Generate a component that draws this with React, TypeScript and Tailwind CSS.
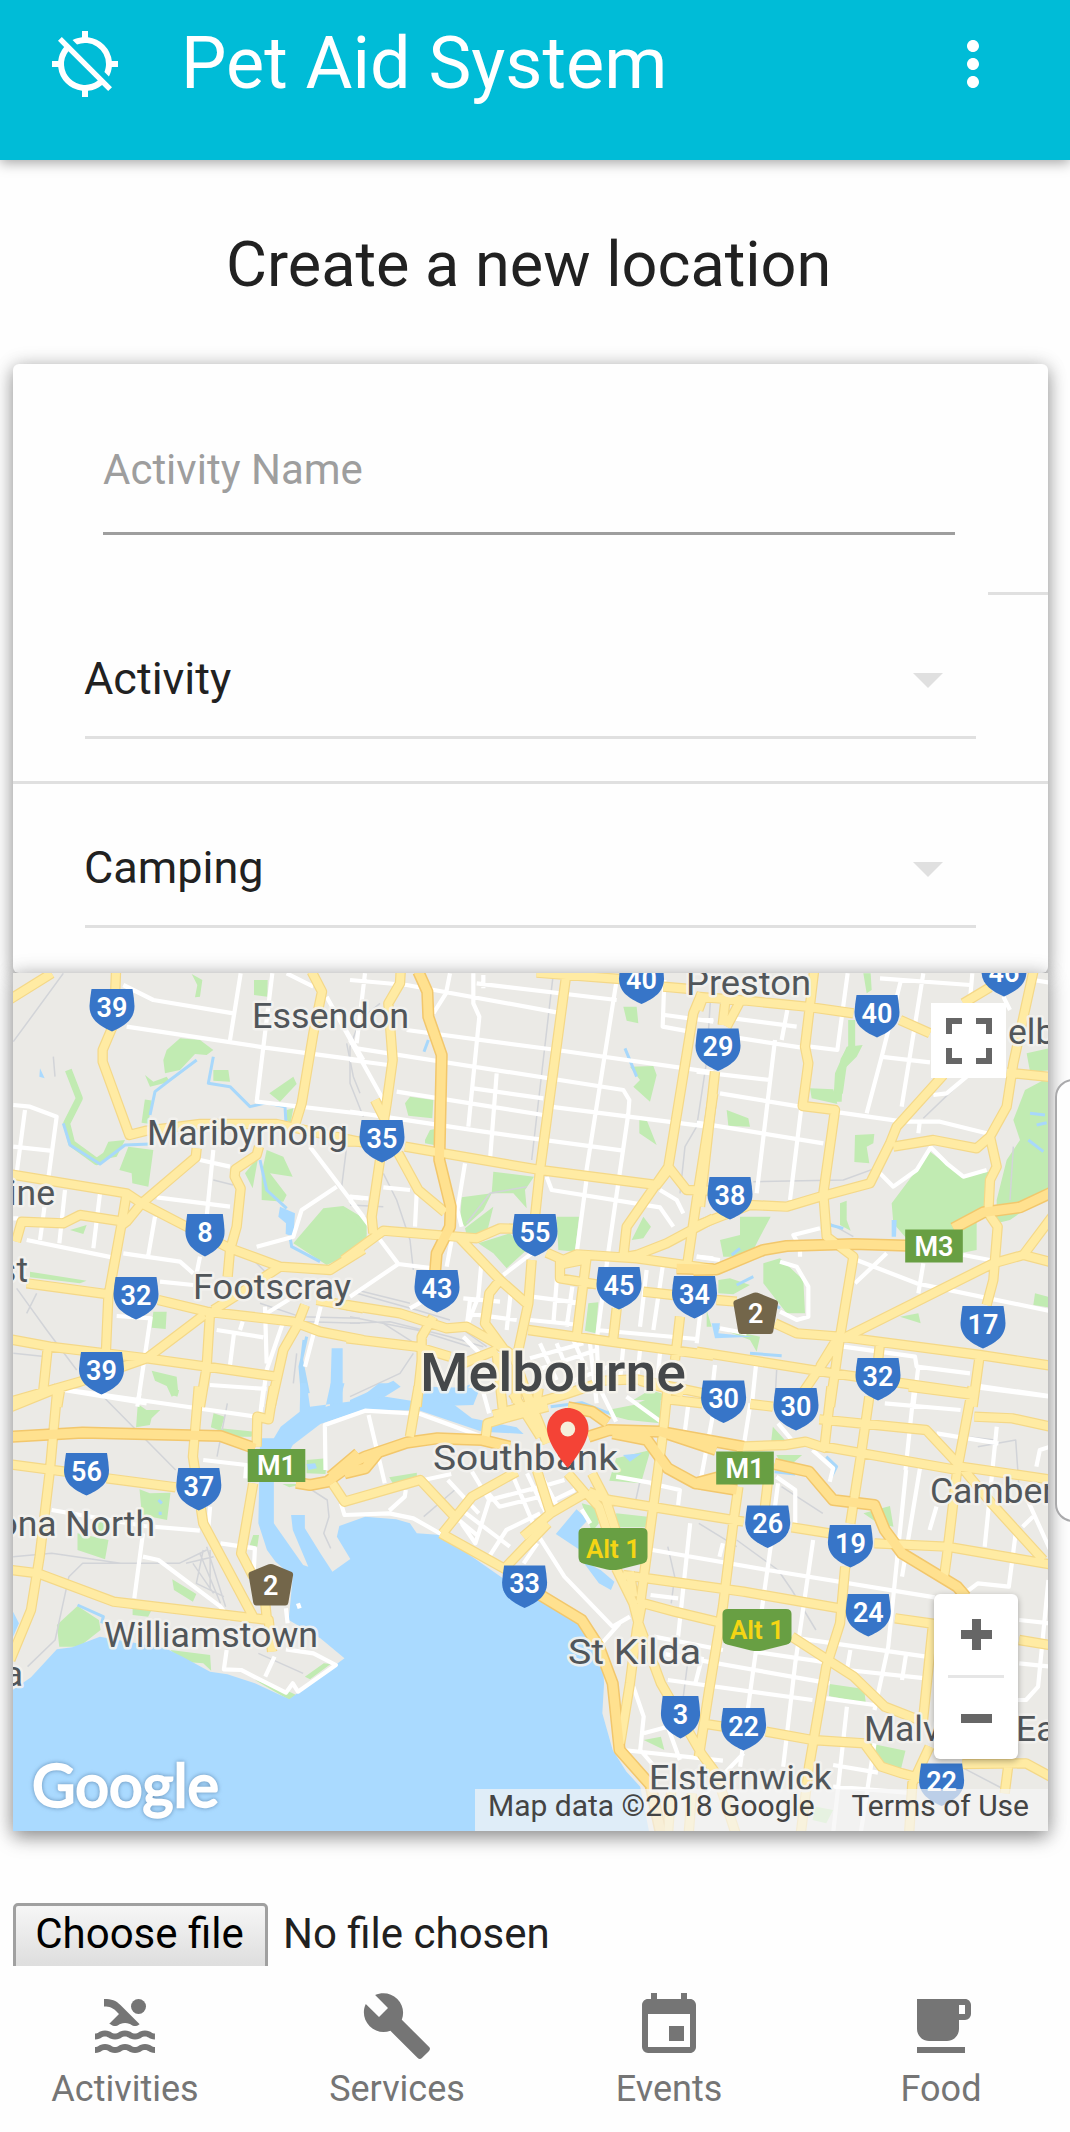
import { Fragment } from "react";
import {
  MdBuild,
  MdEvent,
  MdLocalCafe,
  MdLocationDisabled,
  MdMoreVert,
  MdPool,
} from "react-icons/md";

type Tile = {
  transform: string;
  gray: string;
  parks: string;
  strips: string;
  water: string;
  rivers: string;
  minor: string;
  major: string;
  highway: string;
};

/* Map geometry, split into five tiles that each have their own local grid. */
const TILES: Tile[] = [
  {
    transform: "translate(0 960) scale(0.33333)",
    gray: "M190,40 L40,245 M50,985 L140,1110 L230,1230 M80,1060 L110,1000 M40,1180 L140,1190 M1040,250 L1060,350 L1080,400 M1040,560 L1025,680 M640,660 L700,675 M900,1070 L1080,1075 M920,1085 L1080,1090 M780,1030 L900,1070 M160,290 L165,350 M760,900 L820,960 M890,1180 L880,1270",
    parks:
      "M490,300 L500,270 L540,235 L600,240 L640,270 L620,285 L585,282 L540,330 L495,340Z M450,380 L435,345 L460,365 L500,350 L510,365Z M640,330 L685,330 L690,365 L640,362Z M762,60 L803,60 L802,110 L762,105Z M385,560 L460,570 L445,680 L397,670 L395,640 L358,630Z M300,600 L325,545 L375,540 L350,590Z M808,400 L880,350 L890,372 L840,425Z M800,570 L850,590 L878,650 L810,640 L860,705 L850,725 L785,720 L785,640Z M775,590 L735,640 L758,685Z M880,850 L970,745 L1030,738 L1100,780 L1100,860 L980,915Z M210,810 L260,795 L250,822Z M90,935 L260,962 L240,970 L90,952Z M460,1055 L500,1055 L497,1107 L455,1103Z M455,1232 L530,1250 L535,1300 L515,1310 L500,1278 L465,1262Z M575,42 L607,60 L600,110 L585,112 L592,75Z M860,450 L880,445 L872,490 L860,480Z",
    strips: "M205,330 L238,415 L200,490 L215,550 L290,605 L340,570 M435,490 L445,420",
    water: "M840,740 L885,760 L880,830 L857,822 L858,790 L835,770Z M995,1165 L1028,1165 L1028,1340 L990,1340Z M120,325 L134,355 L118,350Z",
    rivers:
      "M590,300 L510,360 L465,395 L450,465 M640,290 L625,370 L690,380 L750,440 L800,428 L855,440 L858,490 M190,490 L210,555 L300,612 L375,555 L450,552 M780,600 L800,690 L860,745 M870,830 L875,860 L960,905 M920,1130 L900,1220 L910,1340 M905,1220 L920,1330 M912,1140 L905,1200 L925,1300",
    minor:
      "M370,75 L460,120 L700,160 M722,40 L690,240 M380,200 L790,262 L1090,302 M817,40 L770,425 L1090,462 M860,40 L940,80 M980,110 L1090,310 M985,120 L1090,300 M40,435 L90,440 L170,470 L120,840 M75,450 L50,640 M40,560 L150,572 M195,690 L178,850 M300,700 L280,865 M80,840 L340,893 M370,880 L540,905 L580,940 M465,770 L445,885 M470,712 L690,740 M640,570 L620,770 M600,600 L690,620 M600,890 L590,940 M930,560 L1090,770 M1010,680 L905,750 L880,830 L770,860 M1045,710 L1090,715 M452,1070 L412,1340 M350,1068 L455,1075 M480,965 L580,975 M650,1110 L790,1132 M728,1085 L720,1110 M702,1120 L690,1215 M850,1085 L800,1230 L785,1340 M795,1040 L800,1210 M630,1275 L800,1287 M962,1040 L915,1220 M190,1290 L440,1330 M880,1010 L800,1060 M40,775 L55,775",
    major:
      "M30,118 L155,40 M348,35 L342,190 L308,270 L308,305 L388,525 L440,512 L600,492 L830,492 L1090,548 M935,35 L966,95 L940,220 L905,430 L885,495 M590,565 L587,592 L425,730 L380,785 L360,800 M777,560 L770,585 L706,628 L704,650 L722,685 L710,800 L690,870 L683,950 M30,643 L380,700 L425,730 L550,795 L690,865 L840,920 L990,930 L1090,868 M48,845 L65,785 L190,790 L240,765 L370,785 M380,700 L365,790 L325,1010 L318,1170 M80,970 L325,1003 M475,1020 L620,1055 L880,1085 L960,1115 L1090,1140 M640,1050 L720,1000 L840,920 M30,1138 L150,1160 L440,1195 L620,1220 L830,1250 M143,1165 L130,1290 M30,1325 L240,1265 L440,1195 L612,1065 M630,1060 L620,1220 L600,1340 M915,1035 L890,1100 L850,1170 L812,1340 M950,1020 L1090,1045 M180,1290 L172,1340",
    highway: "",
  },
  {
    transform: "translate(350 960) scale(0.33333)",
    gray: "M610,40 L545,600 M1075,270 L1040,500 L1005,560 L990,700 M90,130 L30,180 L0,260 L0,370 L40,470 M100,640 L140,720 L180,840 L190,930 M0,735 L100,740 M0,1090 L120,1085 L300,1130 L400,1160 M0,1070 L200,1110 L360,1160 M20,990 L180,1030 M0,1310 L150,1240 L190,1180 M20,1000 L200,1050 L300,1080 M100,1090 L210,1160 M350,790 L420,700 L530,680 M340,1110 L410,1160",
    parks:
      "M165,430 L180,410 L250,420 L247,475 L175,467Z M225,540 L240,510 L252,508 L252,555 L225,550Z M430,635 L552,650 L525,690 L530,745 L490,700 L425,700Z M335,712 L425,700 L400,750 L345,800 L330,780Z M345,805 L430,740 L415,800 L400,835 L350,825Z M385,850 L480,820 L530,870 L470,925 L430,880Z M620,770 L687,770 L675,875 L625,870Z M845,840 L880,770 L903,800 L880,835Z M820,140 L860,140 L865,190 L830,182Z M840,320 L910,318 L920,345 L900,425 L850,380 L870,360Z M868,480 L890,480 L920,555 L868,520Z M715,1030 L745,1027 L737,1120 L705,1112Z M-20,755 L50,820 L-20,870Z M850,1320 L900,1290 L1000,1320Z M1070,1050 L1085,1100 L1070,1100Z",
    strips: "",
    water: "M0,1320 L130,1262 L152,1280 L80,1325 L0,1345Z M200,1325 L240,1280 L390,1285 L370,1335 L200,1340Z",
    rivers: "M235,240 L222,275 M825,265 L860,350",
    minor:
      "M0,60 L170,75 L620,157 M45,40 L20,250 M300,40 L288,100 L250,160 M170,210 L620,270 L1090,337 M20,265 L820,390 L838,420 L835,460 L770,910 M370,40 L370,130 L388,170 L355,500 M380,70 L800,120 M400,45 L400,85 M800,60 L708,640 M140,395 L580,465 M0,455 L400,515 L820,572 M440,340 L420,600 M370,385 L580,415 M600,440 L1090,502 M0,300 L115,315 M345,610 L322,750 L335,800 M590,650 L605,690 L930,742 L970,800 M930,690 L980,720 L1000,760 M712,640 L680,880 M772,900 L740,1140 L745,1250 M100,682 L180,690 M200,700 L195,800 M0,720 L145,912 L250,925 M145,912 L0,1010 M0,710 L55,715 M305,840 L290,920 M395,900 L385,1010 L350,1100 M460,945 L545,880 M340,1015 L450,1025 M482,1000 L470,1110 M350,1060 L500,1080 M545,1010 L700,1030 M540,1080 L690,1095 M622,940 L610,1090 M667,980 L650,1100 M890,930 L870,1100 M938,920 L910,1110 M740,1110 L1040,1137 M1052,1050 L1040,1150 M943,60 L938,200 L1020,215 M945,165 L1090,185 M1040,890 L1090,895 M360,1020 L350,1100 M0,240 L100,420 M180,1045 L260,1000 M540,1195 L700,1150 M560,1230 L740,1170 M570,1150 L620,1260 M620,1150 L660,1250 M670,1140 L710,1230 M600,1290 L800,1210 M720,1150 L740,1330 M820,1160 L810,1260 M870,1170 L860,1270 M930,1180 L920,1280 M340,1130 L400,1190",
    major:
      "M152,35 L150,70 L115,130 L128,300 L110,430 L102,480 M75,420 L105,480 M-10,545 L35,545 M165,560 L570,630 L920,675 L955,630 M145,580 L205,690 L285,757 M90,600 L65,770 L70,820 M-20,900 L100,812 L320,830 L380,835 L450,805 L490,806 M650,35 L570,630 L555,770 M560,38 L810,57 M940,80 L1020,87 M1055,100 L1030,160 L955,620 L1010,690 L1090,692 M955,620 L830,800 L820,890 M1090,775 L950,850 L860,885 L830,890 M1090,400 L1040,720 L1010,925 M590,878 L640,900 L680,883 L860,895 L1090,927 M630,900 L630,955 L740,973 M640,912 L700,900 M880,995 L970,1005 M710,890 L680,1130 M545,900 L535,1030 L505,1170 M330,835 L450,960 L535,1035 M450,960 L418,1000 L405,1090 L460,1165 M-10,1035 L150,1060 L290,1105 L350,1100 L430,1145 L480,1180 M250,1070 L215,1130 L215,1200 L200,1340 M-10,1135 L200,1160 L300,1190 M535,1110 L780,1145 L1090,1187 M800,1045 L790,1135 M990,1070 L975,1200 M440,1180 L458,1345 M485,1170 L545,1345 M500,1185 L500,1330 M340,1210 L440,1170 M430,1365 L640,1305 L730,1275 M760,1262 L860,1258 L1060,1300 M870,1262 L1000,1300",
    highway: "M205,35 L232,95 L235,170 L275,285 L268,600 L302,740 L300,800 L260,880 L255,940 M980,925 L1090,928",
  },
  {
    transform: "translate(700 960) scale(0.33333)",
    gray: "M800,350 L670,475 M160,665 L430,660 L540,620 M390,790 L460,830 M940,560 L930,720 M35,60 L20,300 M230,1230 L225,1320",
    parks:
      "M330,385 L400,388 L412,432 L335,415Z M80,450 L145,475 L150,500 L85,497Z M465,525 L523,522 L520,550 L500,560 L508,610 L463,606Z M690,575 L790,650 L865,635 L862,740 L830,770 L830,870 L780,880 L615,830 L580,790 L575,730 L620,670Z M975,390 L1060,345 L1060,690 L930,780 L890,790 L890,720 L920,600 L960,540 L940,480Z M980,280 L1060,262 L1060,330 L990,335Z M420,730 L440,722 L440,780 L452,812 L420,795Z M120,770 L212,770 L175,840 L150,890 L70,890 L60,840 L120,825Z M190,910 L240,895 L310,960 L315,1060 L260,1060 L190,970Z M55,960 L90,955 L150,975 L100,1003 L55,1000Z M1005,1000 L1050,1012 L1045,1042 L1000,1035Z M600,1070 L655,1060 L662,1090Z M45,1100 L180,1130 L170,1175 L150,1140Z M490,40 L512,40 L515,90 L500,100Z M440,260 L488,255 L470,290 L430,330 L425,425 L400,425 L405,340Z",
    strips: "M455,180 L455,260 L432,300 L418,400",
    water: "M35,1090 L60,1090 L55,1120 L160,1130 L45,1135Z M575,780 L590,780 L588,830 L575,830Z",
    rivers: "M110,975 L160,950 M990,460 L1035,465 M985,540 L1030,575 M1010,495 L1040,488 M150,1180 L245,1187 M200,1020 L240,1045 M95,885 L120,865 M390,795 L430,805",
    minor:
      "M443,40 L412,270 L330,260 M603,60 L545,290 L500,460 M540,290 L690,307 M670,40 L605,440 M540,55 L810,75 M817,40 L810,120 M60,170 L290,200 M262,150 L245,240 M90,230 L300,262 M225,240 L170,700 M-10,335 L210,360 M60,400 L300,440 M303,450 L270,720 M-10,488 L370,550 M400,455 L610,485 L720,485 L860,520 M660,480 L655,520 M800,350 L740,400 L700,405 M540,640 L580,680 L650,630 L692,562 L740,610 L790,650 L860,630 M470,900 L650,970 L1060,1055 M560,880 L465,970 M670,910 L655,1000 M790,885 L870,900 M360,805 L280,825 L300,860 L300,890 M240,905 L290,920 L325,980 L325,1070 L290,1080 L240,1055 M-10,890 L60,900 M430,1160 L645,1190 L650,1220 L810,1240 M655,1220 L640,1340 M840,1278 L1060,1310 M168,1215 L155,1340 M45,1215 L40,1260 M1000,60 L1060,70 M910,110 L930,150 M0,180 L40,180 M60,1105 L140,1120",
    major:
      "M-10,110 L140,122 L320,140 L460,160 M10,110 L-5,150 M78,105 L68,195 M125,115 L80,200 M342,35 L315,260 L325,310 L308,438 L405,450 L370,700 L380,830 L460,890 L420,1130 L390,1340 M600,180 L690,220 M730,345 L590,500 L570,550 L510,670 L360,710 L260,740 L150,735 L-10,797 M870,82 L790,130 M1000,35 L940,310 L920,440 L870,530 L830,565 L700,540 L580,560 M920,338 L1060,352 M870,530 L890,620 L870,660 L865,760 L893,800 L880,960 L860,1035 M45,335 L0,740 M440,1130 L880,910 L970,885 L1060,908 M1060,765 L970,885 M50,1020 L110,1025 M225,1090 L290,1120 L420,1130 L840,1185 L1060,1218 M-10,1175 L400,1240 L820,1300 M840,1180 L818,1340 M430,1120 L300,1310 M540,1150 L535,1195 M415,1130 L360,1220",
    highway: "M-20,930 L50,928 L190,870 L260,858 L460,852 L620,857 M760,805 L850,757 L960,742 L1060,695",
  },
  {
    transform: "translate(0 1390) scale(0.34447 0.33333)",
    gray: "M300,20 L510,240 M660,40 L630,200 M38,500 L150,490 L350,520 L520,520 L600,480 M350,520 L240,520 L200,560 L160,750 L80,830 M600,470 L655,650 M590,480 L570,580 L650,620 M580,490 L640,640 M560,520 L620,610 M610,480 L610,600 M540,520 L620,500 M890,290 L950,330 L955,380 L940,430 L960,475 M750,790 L880,850 M1230,380 L1320,300",
    parks:
      "M165,705 L225,648 L287,690 L292,720 L230,770 L172,770Z M400,42 L425,60 L465,60 L440,85 L435,105 L395,112Z M620,70 L652,80 L640,122 L612,112Z M405,298 L435,310 L495,308 L485,390 L412,375Z M225,430 L315,450 L305,508 L225,480Z M495,780 L610,795 L613,842 L590,820 L530,815Z M885,860 L940,820 L960,822 L900,868Z M500,568 L570,612 L560,635 L505,600Z M890,210 L948,205 L945,252 L890,250Z M1130,262 L1210,248 L1210,270 L1140,280Z M640,115 L740,125 L730,140 L640,140Z M735,435 L752,435 L747,470 L725,465Z M740,870 L840,905 L860,915 L840,930Z M820,282 L880,282 L840,292Z M385,655 L440,660 L430,680 L385,675Z M495,0 L520,0 L515,20 L500,15Z M275,380 L310,400 L300,440 L275,430Z",
    strips: "",
    water:
      "M872,-20 L870,65 L815,110 L795,145 L755,145 L750,400 L775,480 L800,515 L850,560 L838,690 L930,745 L1000,805 L840,928 L740,880 L660,853 L610,845 L530,800 L480,775 L290,740 L210,772 L165,778 L90,862 L30,905 L30,1400 L1600,1400 L1600,650 L1460,565 L1280,435 L1210,430 L1190,400 L1150,388 L1060,380 L985,408 L978,440 L1017,507 L965,545 L930,490 L885,415 L885,375 L845,375 L850,420 L895,530 L880,525 L795,400 L795,270 L850,165 L930,102 L1060,58 L1220,62 L1400,125 L1520,132 L1500,112 L1370,85 L1300,30 L1240,40 L1120,20 L1050,30 L900,50 L890,-20Z M960,-20 L1000,-20 L985,40 L945,50Z M1050,20 L1100,-20 L1150,-20 L1100,30Z M1225,20 L1300,15 L1370,-20 L1350,5 L1310,45Z M38,665 L55,700 L38,740Z M890,222 L915,220 L920,235 L895,240Z",
    rivers: "M225,645 L300,680 L295,700 M460,330 L470,340 M465,365 L465,375",
    minor:
      "M165,-5 L405,30 L760,82 M405,10 L400,40 M765,-10 L755,80 M590,210 L715,225 L712,265 M150,360 L420,408 L580,422 M415,430 L390,625 M415,500 L460,510 L640,650 L670,690 M610,350 L605,410 M640,460 L740,475 L737,540 M658,780 L650,838 L700,840 L830,908 L850,880 L865,905 L975,825 L910,790 L830,778 M797,800 L770,860 M945,240 L943,105 L1060,62 L1220,72 L1400,140 M1070,75 L1117,280 M990,340 L1000,375 L1130,370 L1200,385 L1280,432 M1130,362 L1175,320 L1178,300 M1230,270 L1310,252 M1300,270 L1390,370 M1320,380 L1390,440 M1340,360 L1480,470 M1340,400 L1380,460 L1420,330 M1410,300 L1450,350 L1568,320 M1370,245 L1420,330 L1568,290 M1490,260 L1568,450 M1530,250 L1590,380 M1420,500 L1470,420 L1568,370 M1400,-5 L1420,70 M1560,460 L1520,520 M830,655 L835,700 M870,655 L865,640",
    major:
      "M30,52 L165,-5 M167,-10 L145,240 L115,500 L90,660 L30,810 M577,-10 L560,200 L590,400 L740,690 M795,-10 L780,88 L747,80 L745,170 M735,280 L700,490 L735,560 M30,223 L190,245 M310,265 L510,292 M30,540 L110,550 L330,635 L780,690 L790,785 M770,640 L775,690 M965,280 L1000,335 L1220,270 L1320,380 M1285,430 L1370,320 L1500,245 M1280,430 L1475,542 M1460,540 L1590,400 M1215,-10 L1190,140 M1410,140 L1415,100 L1480,80 L1590,50",
    highway: "M30,140 L240,128 L640,138 L740,175 M860,278 L900,285 L950,275 L1030,215 L1060,200 L1180,158 L1270,145 L1400,150 L1480,170 M960,260 L1040,190 M1000,250 L1060,235 L1100,185",
  },
  {
    transform: "translate(530 1390) scale(0.34447 0.33333)",
    gray: "M320,270 L305,340 M730,290 L850,370 M600,450 L720,540 L760,600 L830,720 M490,400 L600,470 M400,470 L420,560 L410,640 M460,800 L440,960 M1300,170 L1410,150 L1420,300 M1250,1130 L1380,1200 M1180,130 L1350,150",
    parks:
      "M225,60 L300,45 L380,10 L378,100 L285,90 L230,75Z M250,205 L350,180 L322,280 L230,272Z M150,340 L190,350 L200,400 L180,425Z M250,370 L342,380 L335,412 L250,412Z M968,370 L1045,348 L1055,410 L1010,400Z M870,882 L970,897 L975,940 L868,918Z M985,1060 L1090,1082 L1075,1145 L1020,1130Z M705,110 L740,150 L700,155Z M715,195 L790,195 L740,240Z M830,1250 L880,1260 L860,1300 L820,1290Z M330,1050 L380,1040 L390,1080Z",
    strips: "",
    water:
      "M-20,640 L50,640 L100,675 L150,700 L180,760 L210,800 L215,880 L210,970 L240,1080 L280,1145 L320,1190 L360,1400 L-20,1400Z M75,432 L135,358 L168,390 L145,415 L145,480Z M150,510 L205,540 L245,575 L235,600 L200,580Z M270,195 L325,190 L290,215Z",
    rivers: "M710,245 L770,252 M60,50 L150,38 L230,70 M860,200 L890,230 L870,270",
    minor:
      "M200,-10 L250,95 M280,20 L400,110 M460,40 L450,120 M530,80 L490,300 M640,40 L620,170 M720,100 L760,150 L810,150 M355,480 L690,540 L1175,622 M822,450 L770,820 L735,1130 M700,460 L640,900 L610,1130 M465,400 L430,740 M1092,240 L1040,770 L1000,960 M1115,-5 L1090,240 M1132,235 L1080,560 M1355,110 L1320,470 M1030,40 L1250,60 M760,742 L1150,800 M380,790 L870,880 M650,785 L880,820 M400,870 L820,930 M860,925 L1000,945 M930,780 L920,840 L1150,865 M1092,790 L1080,870 M1410,430 L1390,590 L1300,580 L1255,615 M1505,570 L1475,890 L1440,930 L1410,930 M20,430 L100,560 L240,710 L290,680 M200,770 L260,700 M300,890 L330,980 L320,1080 L370,1140 M270,1080 L560,1112 M330,1030 L400,1010 L435,1110 M920,950 L880,1330 M1000,1060 L960,1330 M880,1125 L1010,1148 M880,1190 L1120,1210 M1420,820 L1510,830 M1420,690 L1510,700 M715,260 L770,300 L770,400 M720,280 L705,400 M820,180 L880,235 L870,275 M350,280 L435,300 L430,345 M350,615 L430,625 M150,358 L175,400 M1280,-10 L1510,20 M1180,130 L1360,160 M1470,230 L1480,180 L1510,170 M1440,320 L1510,480 M1430,410 L1460,380 M1180,350 L1160,420 M500,800 L480,880 M360,740 L560,780 M620,1090 L500,1220 M20,230 L80,350 M0,300 L100,270 M30,350 L130,300 M250,260 L360,280 M560,460 L550,500",
    major:
      "M400,-10 L385,140 L320,640 M400,28 L500,40 M640,42 L705,50 M840,88 L1150,120 L1250,230 L1520,270 M875,-10 L855,170 L1240,240 M985,20 L960,200 L930,400 M915,530 L900,700 L860,830 L810,1130 L785,1340 M1285,-10 L1240,240 L1210,500 L1200,575 M1100,-10 L1290,15 M1290,80 L1400,85 L1520,112 M1260,240 L1340,340 L1490,510 M170,305 L230,330 L620,395 M760,412 L870,430 M1000,460 L1210,470 L1520,525 M605,290 L590,400 L560,650 L520,900 L490,1100 M690,280 L682,350 M-20,440 L60,370 L160,310 L110,250 M60,370 L20,240 M180,250 L220,330 L250,425 M165,310 L200,350 L225,425 M250,535 L300,640 L315,700 L380,880 L500,1095 L540,1150 M290,545 L300,620 M325,640 L310,720 L290,880 L262,1060 M270,555 L620,605 L900,655 M330,640 L420,665 L550,697 M1060,685 L1175,702 M1420,750 L1520,767 M760,740 L880,820 L940,860 L1030,950 L1130,990 M500,1000 L560,1010 M685,1025 L820,1050 L970,1060 L1020,1130 L1080,1150 L1135,1165 M1170,700 L1140,1000 M1255,1122 L1440,1120 L1520,1165 M1388,1130 L1378,1210 M1160,1070 L1110,1180 L1100,1340 M470,1210 L460,1340 M540,1150 L600,1340 M410,1200 L400,1340 M600,170 L740,165 L800,155 L860,175 M-50,10 L30,140 M-15,-5 L50,160 M25,-5 L10,110",
    highway:
      "M170,140 L230,120 L380,125 L540,180 M380,125 L620,170 M240,130 L340,150 L400,235 L480,280 L545,262 M110,52 L180,65 L225,98 M480,280 L600,300 M710,222 L810,245 L880,330 L1000,345 L1030,420 L1080,490 L1240,590 L1265,620 M30,615 L150,690 L200,770 L240,880 L260,1080 L350,1185 L380,1330",
  },
];

const LAYERS: { key: keyof Tile; cls: string }[] = [
  { key: "parks", cls: "fill-[#c1ebb2] stroke-none" },
  { key: "strips", cls: "fill-none stroke-[#c1ebb2] stroke-[7px]" },
  { key: "gray", cls: "fill-none stroke-[#d2d4d8] stroke-[1.5px]" },
  { key: "rivers", cls: "fill-none stroke-[#a8d8fb] stroke-[3px]" },
  { key: "water", cls: "fill-[#aadaff] stroke-none" },
  { key: "minor", cls: "fill-none stroke-white stroke-[4.2px]" },
  { key: "major", cls: "fill-none stroke-[#f4d888] stroke-[10.4px]" },
  { key: "highway", cls: "fill-none stroke-[#f2c76c] stroke-[12.2px]" },
  { key: "major", cls: "fill-none stroke-[#ffeba3] stroke-[8px]" },
  { key: "highway", cls: "fill-none stroke-[#ffe18f] stroke-[9.2px]" },
];

type Label = { t: string; x: number; y: number; w?: number; end?: boolean };
const LABELS: Label[] = [
  { t: "Essendon", x: 252, y: 1028, w: 157 },
  { t: "Preston", x: 686, y: 994.5, w: 125 },
  { t: "elb", x: 1008, y: 1044 },
  { t: "Maribyrnong", x: 147, y: 1145, w: 201 },
  { t: "ine", x: 55, y: 1205, end: true },
  { t: "st", x: 28, y: 1282, end: true },
  { t: "Footscray", x: 193, y: 1299, w: 158 },
  { t: "Southbank", x: 433, y: 1470, w: 185 },
  { t: "ona North", x: 155, y: 1536, end: true },
  { t: "Williamstown", x: 104, y: 1647, w: 214 },
  { t: "a", x: 23, y: 1686, end: true },
  { t: "St Kilda", x: 568, y: 1664, w: 133 },
  { t: "Camber", x: 930, y: 1503 },
  { t: "Malv", x: 864, y: 1741 },
  { t: "Ea", x: 1016, y: 1741 },
  { t: "Elsternwick", x: 649, y: 1790, w: 183 },
];

const SHIELDS: [string, number, number][] = [
  ["39", 112, 989],
  ["8", 205, 1214],
  ["32", 136, 1277],
  ["39", 101.5, 1352],
  ["35", 382, 1120],
  ["55", 535, 1214],
  ["43", 437, 1270],
  ["40", 641.5, 961.5],
  ["45", 619, 1267],
  ["34", 694.5, 1276],
  ["29", 718, 1028.5],
  ["38", 730, 1177],
  ["40", 877, 995],
  ["46", 1004, 954],
  ["17", 983, 1306],
  ["32", 878, 1358],
  ["30", 723.6, 1380.5],
  ["30", 796, 1388],
  ["56", 86.5, 1453],
  ["37", 198.8, 1468],
  ["33", 524.6, 1565.5],
  ["26", 767.7, 1505.5],
  ["19", 850.4, 1525],
  ["24", 868.3, 1594],
  ["3", 680.5, 1696],
  ["22", 743.6, 1708],
  ["22", 941.6, 1763.5],
];

const BROWN: [number, number][] = [
  [755.7, 1292.5],
  [270.8, 1564],
];

const MOTORWAYS: [string, number, number][] = [
  ["M3", 934, 1229.5],
  ["M1", 276.5, 1449],
  ["M1", 745, 1451.5],
];

const ALTS: [number, number][] = [
  [613, 1528],
  [757, 1609],
];

function StreetMap() {
  return (
    <svg viewBox="13 973 1035 858" className="block h-full w-full">
      <rect x="13" y="973" width="1035" height="858" className="fill-[#ebeae6]" />
      {LAYERS.map((layer, i) => (
        <Fragment key={i}>
          {TILES.map((tile) => (
            <path
              key={tile.transform}
              d={tile[layer.key] || "M0,0"}
              transform={tile.transform}
              vectorEffect="non-scaling-stroke"
              strokeLinejoin="round"
              className={layer.cls}
            />
          ))}
        </Fragment>
      ))}
      {LABELS.map((l) => (
        <text
          key={l.t}
          x={l.x}
          y={l.y}
          textLength={l.w}
          lengthAdjust="spacingAndGlyphs"
          textAnchor={l.end ? "end" : "start"}
          paintOrder="stroke"
          strokeLinejoin="round"
          className="fill-[#51565a] stroke-[#f4f3f0]/90 stroke-[5px] text-[35.5px]"
        >
          {l.t}
        </text>
      ))}
      <text
        x="420"
        y="1391"
        textLength="266"
        lengthAdjust="spacingAndGlyphs"
        paintOrder="stroke"
        strokeLinejoin="round"
        className="fill-[#45484a] stroke-[#f7f5ee]/80 stroke-[5px] text-[54px] font-medium"
      >
        Melbourne
      </text>
      {SHIELDS.map(([n, x, y]) => (
        <g key={`${n}-${x}`} transform={`translate(${x} ${y})`}>
          <path
            transform={n.length === 1 ? "scale(0.87 1)" : undefined}
            d="M-20.5,0 H20.5 Q22,9 22.5,17 C22.5,31 12,37 0,42.5 C-12,37 -22.5,31 -22.5,17 Q-22,9 -20.5,0Z"
            className="fill-[#3775c8]"
          />
          <text y="27.5" textAnchor="middle" className="fill-white text-[27px] font-semibold">
            {n}
          </text>
        </g>
      ))}
      {BROWN.map(([x, y]) => (
        <g key={x} transform={`translate(${x} ${y})`}>
          <path
            d="M-4,1 Q0,-1 4,1 L21,8 Q22.5,9 22.3,11 L17.5,39 Q17,41.5 14.5,41.5 H-14.5 Q-17,41.5 -17.5,39 L-22.3,11 Q-22.5,9 -21,8Z"
            className="fill-[#73664a]"
          />
          <text y="30.500" textAnchor="middle" className="fill-white text-[27px] font-semibold">
            2
          </text>
        </g>
      ))}
      {MOTORWAYS.map(([n, x, y]) => (
        <g key={`${n}-${x}`} transform={`translate(${x} ${y})`}>
          <rect x="-28.8" width="57.6" height="33" className="fill-[#689f43]" />
          <text y="26" textAnchor="middle" className="fill-white text-[27px] font-semibold">
            {n}
          </text>
        </g>
      ))}
      {ALTS.map(([x, y]) => (
        <g key={x} transform={`translate(${x} ${y})`}>
          <path
            d="M-29,0 H29 Q34.5,0 34.5,5 V29 Q34.5,34 30,35.5 L6,41.5 Q0,42.5 -6,41.5 L-30,35.5 Q-34.5,34 -34.5,29 V5 Q-34.5,0 -29,0Z"
            className="fill-[#689f43]"
          />
          <text y="29.5" textAnchor="middle" className="fill-[#f5d514] text-[26px] font-semibold">
            Alt 1
          </text>
        </g>
      ))}
      <path
        d="M567.7,1408 C556,1408 547,1417.5 547,1429 C547,1444.5 567.7,1468 567.7,1468 C567.7,1468 588.5,1444.5 588.5,1429 C588.5,1417.5 579.5,1408 567.7,1408Z"
        className="fill-[#f44336]"
      />
      <circle cx="567.8" cy="1429" r="7.4" className="fill-[#f5efdc]" />
      <text
        x="32"
        y="1807"
        textLength="187"
        lengthAdjust="spacingAndGlyphs"
        className="fill-white stroke-white stroke-[2.4px] font-['Lato',sans-serif] text-[60px] font-normal drop-shadow-[0_0_2px_rgba(70,110,150,0.7)]"
      >
        Google
      </text>
    </svg>
  );
}

function SelectRow({ value }: { value: string }) {
  return (
    <div className="mx-[72px] mt-5 flex h-[124px] items-center justify-between border-b-[3px] border-[#e0e0e0] pt-1.5 pr-[33px] text-[45px] leading-none text-[#212121]">
      <span className="-ml-px">{value}</span>
      <svg viewBox="0 0 30 15" className="mt-1 h-[15px] w-[30px] fill-[#e0e0e0]">
        <path d="M0 0H30L15 15Z" />
      </svg>
    </div>
  );
}

const TABS = [
  { label: "Activities", Icon: MdPool },
  { label: "Services", Icon: MdBuild },
  { label: "Events", Icon: MdEvent },
  { label: "Food", Icon: MdLocalCafe },
];

export default function App() {
  return (
    <div className="relative flex h-[2132px] w-[1070px] flex-col overflow-hidden bg-[#fefefe] font-['Roboto',sans-serif]">
      <header className="h-[160px] shrink-0 bg-[#00bcd7] text-white shadow-[0_3px_12px_rgba(0,0,0,0.35)]">
        <div className="flex h-32 items-center pr-[61px] pl-[49px]">
          <MdLocationDisabled className="size-[72px]" />
          <h1 className="ml-[60px] flex-1 text-[72px] leading-none whitespace-nowrap">
            Pet Aid System
          </h1>
          <MdMoreVert className="size-[72px]" />
        </div>
      </header>

      <h2 className="flex h-[204px] shrink-0 items-center pt-[5px] pl-[226px] text-[63px] leading-none whitespace-nowrap text-[#212121]">
        Create a new location
      </h2>

      <section className="ml-[13px] h-[609px] w-[1035px] shrink-0 rounded-[6px] bg-[#fefefe] shadow-[0_6px_18px_rgba(0,0,0,0.36),0_0_20px_rgba(0,0,0,0.14)]">
        <div className="px-[90px] pt-[71px]">
          <div className="mr-[3px] flex h-[100px] items-start border-b-[3px] border-[#9e9e9e]">
            <span className="text-[42px] leading-[69px] text-[#9e9e9e]">Activity Name</span>
          </div>
        </div>
        <div className="mt-[57px] ml-auto h-[3px] w-[60px] bg-[#e0e0e0]" />
        <div className="flex h-[189px] flex-col border-b-[3px] border-[#e0e0e0]">
          <SelectRow value="Activity" />
        </div>
        <SelectRow value="Camping" />
      </section>

      <section className="relative ml-[13px] h-[858px] w-[1035px] shrink-0 shadow-[0_6px_18px_rgba(0,0,0,0.4),0_0_20px_rgba(0,0,0,0.14)]">
        <StreetMap />
        <button
          aria-label="Toggle fullscreen"
          className="absolute top-[30px] left-[918px] flex size-[75px] items-center justify-center bg-white"
        >
          <svg viewBox="0 0 46 46" className="size-[46px] fill-none stroke-[#666] stroke-[6px]">
            <path d="M3 16V3H16M30 3H43V16M43 30V43H30M16 43H3V30" />
          </svg>
        </button>
        <div className="absolute top-[621px] left-[921px] flex h-[165px] w-[84px] flex-col items-center justify-center rounded-[6px] bg-white shadow-[0_2px_6px_rgba(0,0,0,0.3)]">
          <button aria-label="Zoom in" className="flex h-[82px] items-center justify-center">
            <svg viewBox="0 0 31 31" className="size-[31px] fill-none stroke-[#666] stroke-[9px]">
              <path d="M15.5 0V31M0 15.5H31" />
            </svg>
          </button>
          <div className="h-[3px] w-14 bg-[#e6e6e6]" />
          <button aria-label="Zoom out" className="flex h-[82px] items-center justify-center">
            <svg viewBox="0 0 31 31" className="size-[31px] fill-none stroke-[#666] stroke-[9px]">
              <path d="M0 15.5H31" />
            </svg>
          </button>
        </div>
        <div className="absolute right-0 bottom-0 flex h-[42px] w-[573px] items-start justify-between bg-[#f5f5f5]/70 pr-[19px] pl-[13px] text-[30px] leading-[34px] whitespace-nowrap text-[#444]">
          <span>Map data ©2018 Google</span>
          <span>Terms of Use</span>
        </div>
      </section>

      <div className="mt-[72px] ml-[13px] flex h-[63px] shrink-0 items-start overflow-hidden">
        <button className="h-[70px] w-[255px] shrink-0 rounded-[5px] border-[3px] border-[#a0a0a0] bg-linear-to-b from-[#f6f6f6] to-[#dcdcdc] pr-[2px] pb-[9px] text-[42px] leading-[55px] whitespace-nowrap text-black">
          Choose file
        </button>
        <span className="ml-[15px] text-[42px] leading-[61px] text-[#212121]">No file chosen</span>
      </div>

      <nav className="-ml-[11px] flex h-[166px] w-[1088px] shrink-0 bg-[#fefefe] pt-6 text-[#757575]">
        {TABS.map(({ label, Icon }) => (
          <div key={label} className="flex flex-1 flex-col items-center">
            <Icon className="size-[72px]" />
            <span className="mt-[6px] text-[36px] leading-[42px]">{label}</span>
          </div>
        ))}
      </nav>

      <div className="absolute top-[1079px] left-[1055px] h-[443px] w-[40px] rounded-[18px] border-2 border-[#a9a9ab] bg-[#fefefe]" />
    </div>
  );
}
